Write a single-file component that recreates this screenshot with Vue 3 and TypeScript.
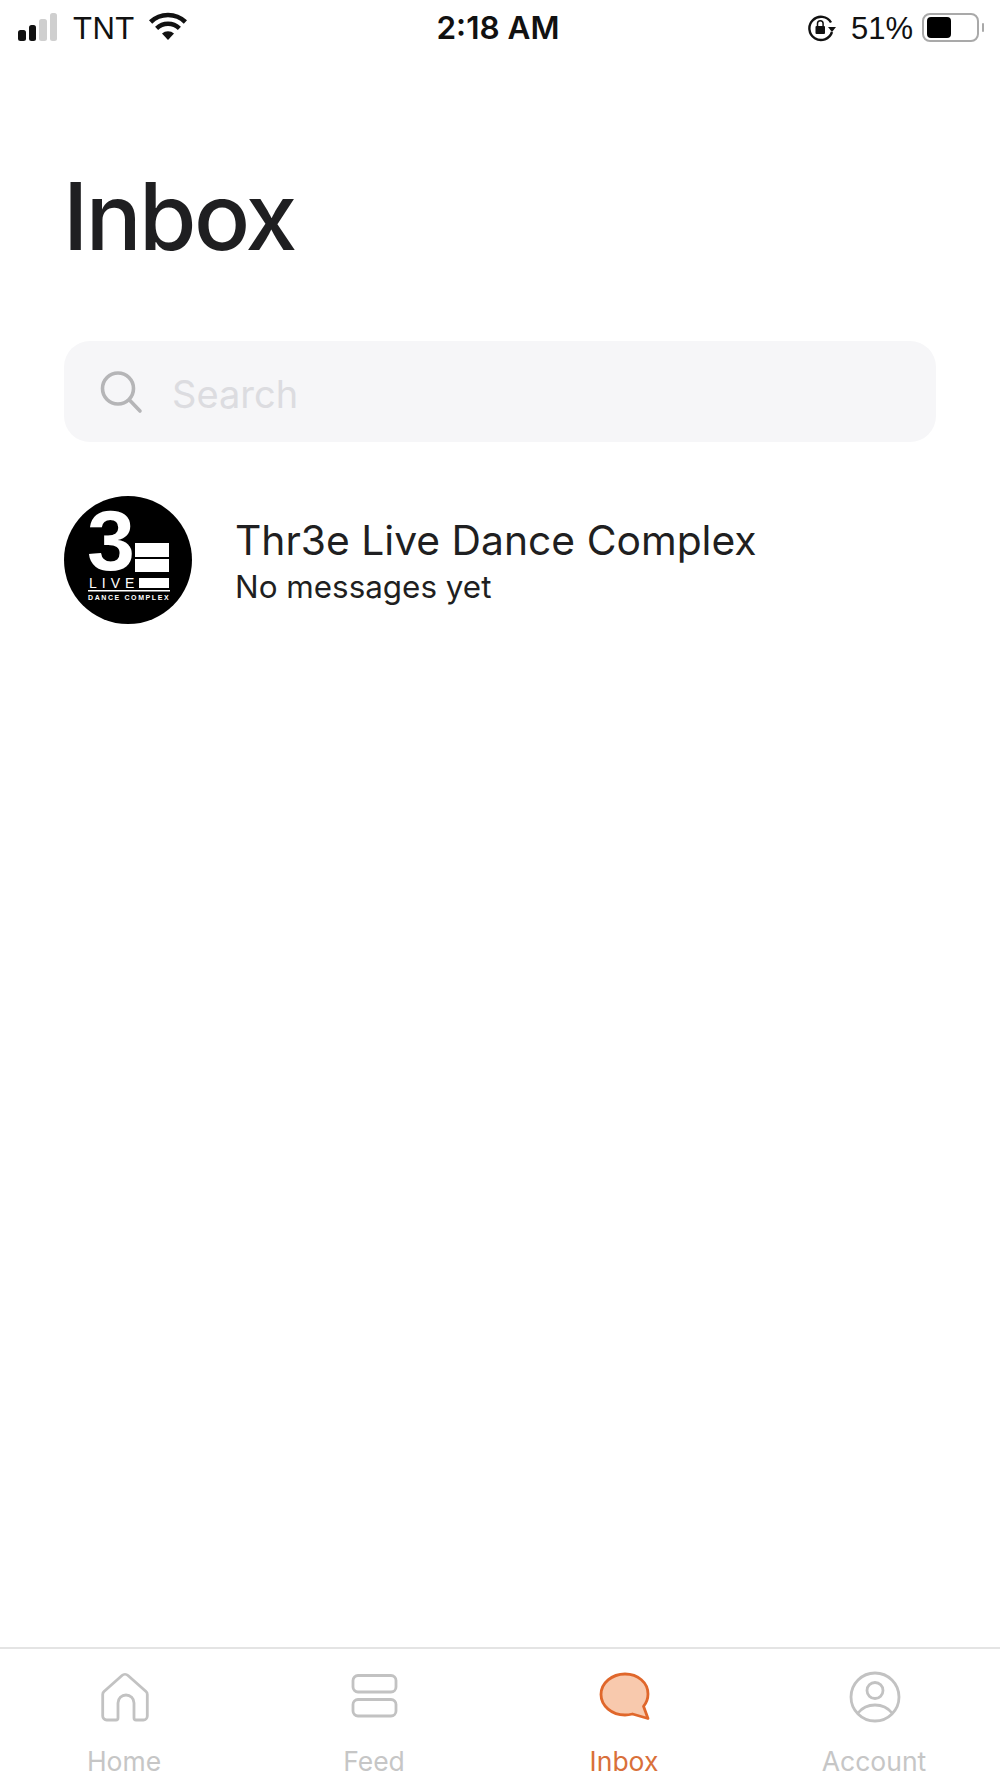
<script setup lang="ts">
const tabs = [
  { key: 'home', label: 'Home' },
  { key: 'feed', label: 'Feed' },
  { key: 'inbox', label: 'Inbox' },
  { key: 'account', label: 'Account' }
]
const active = 'inbox'
</script>

<template>
  <div class="screen">
    <div class="status-bar">
      <div class="status-left">
        <span class="signal">
          <i class="on b1"></i><i class="on b2"></i><i class="b3"></i><i class="b4"></i>
        </span>
        <span class="carrier">TNT</span>
        <svg class="wifi" width="40" height="30" viewBox="0 0 40 30">
          <path d="M20 29 14 22.6a9 9 0 0 1 12 0Z" fill="#111" />
          <path d="M8.6 17.4a16.4 16.4 0 0 1 22.8 0" fill="none" stroke="#111" stroke-width="4.4" />
          <path d="M2.6 11a25 25 0 0 1 34.8 0" fill="none" stroke="#111" stroke-width="4.6" />
        </svg>
      </div>
      <div class="time">2:18 AM</div>
      <div class="status-right">
        <svg class="lock" width="30" height="28" viewBox="0 0 30 28">
          <path d="M24 8.5A11.6 11.6 0 1 0 25 18" fill="none" stroke="#111" stroke-width="2.4" />
          <path d="M21 13h8l-4 5Z" fill="#111" />
          <rect x="8.5" y="12" width="9.5" height="8" rx="1" fill="#111" />
          <path d="M10.5 12V9.6a2.8 2.8 0 0 1 5.6 0V12" fill="none" stroke="#111" stroke-width="1.5" />
        </svg>
        <span class="pct">51%</span>
        <span class="battery"><span class="level"></span></span>
        <span class="nub"></span>
      </div>
    </div>

    <main class="content">
      <h1 class="title">Inbox</h1>

      <div class="search">
        <svg width="46" height="46" viewBox="0 0 46 46">
          <circle cx="20" cy="19.5" r="15.5" fill="none" stroke="#b5b5b7" stroke-width="3.6" />
          <path d="M31.5 31 42 42" fill="none" stroke="#b5b5b7" stroke-width="3.6" stroke-linecap="round" />
        </svg>
        <span class="placeholder">Search</span>
      </div>

      <div class="thread">
        <svg class="avatar" width="128" height="128" viewBox="0 0 128 128">
          <circle cx="64" cy="64" r="64" fill="#000" />
          <text x="23" y="74" class="logo-three">3</text>
          <rect x="71" y="47" width="34" height="14" fill="#fff" />
          <rect x="71" y="63" width="34" height="13" fill="#fff" />
          <rect x="75" y="82" width="30" height="10" fill="#fff" />
          <text x="25" y="92" class="logo-live">LIVE</text>
          <rect x="24" y="94" width="82" height="1.5" fill="#fff" />
          <text x="24" y="104" class="logo-sub">DANCE COMPLEX</text>
        </svg>
        <div class="thread-text">
          <div class="thread-name">Thr3e Live Dance Complex</div>
          <div class="thread-sub">No messages yet</div>
        </div>
      </div>
    </main>

    <nav class="tabbar">
      <div v-for="tab in tabs" :key="tab.key" class="tab" :class="{ active: tab.key === active }">
        <svg class="tab-icon" width="56" height="56" viewBox="0 0 56 56">
          <path
            v-if="tab.key === 'home'"
            d="M7 22.5 25 6.5a4.500 4.500 0 0 1 6 0l18 16a4 4 0 0 1 1.300 3V47a4 4 0 0 1-4 4h-7.300a2 2 0 0 1-2-2V34a8 8 0 0 0-16 0v15a2 2 0 0 1-2 2H9.700a4 4 0 0 1-4-4V25.500a4 4 0 0 1 1.300-3Z"
            fill="none" stroke="#c2c2c2" stroke-width="2.800"
          />
          <g v-else-if="tab.key === 'feed'" fill="none" stroke="#c2c2c2" stroke-width="2.800">
            <rect x="6" y="6.500" width="43" height="16.500" rx="5" />
            <rect x="6" y="30.500" width="43" height="16.500" rx="5" />
          </g>
          <path
            v-else-if="tab.key === 'inbox'"
            d="M28 5c13 0 23 8.500 23 20 0 5-1.700 9-4.500 12.300L51 49.500 35.500 45c-2.400.6-5 1-7.500 1C15 46 4 37 4 25.500 4 14 15 5 28 5Z"
            fill="#f8c9ad" stroke="#e0672b" stroke-width="2.800" stroke-linejoin="round"
          />
          <g v-else fill="none" stroke="#c2c2c2" stroke-width="2.800">
            <circle cx="28" cy="28" r="24" />
            <circle cx="28" cy="21.500" r="8" />
            <path d="M11 44c4-5 10-8 17-8s13 3 17 8" />
          </g>
        </svg>
        <span class="tab-label">{{ tab.label }}</span>
      </div>
    </nav>
  </div>
</template>

<style scoped>
.screen {
  width: 1000px;
  height: 1778px;
  display: flex;
  flex-direction: column;
  overflow: hidden;
  background: #fff;
  color: #1f1f21;
  font-family: Inter, "Liberation Sans", sans-serif;
}

.status-bar {
  display: grid;
  grid-template-columns: 1fr auto 1fr;
  align-items: center;
  height: 54px;
  padding: 0 16px 0 18px;
  color: #111;
  font-family: "Liberation Sans", Arial, sans-serif;
  font-size: 31px;
}

.status-left,
.status-right {
  display: flex;
  align-items: center;
}

.status-right {
  justify-content: flex-end;
}

.signal {
  display: flex;
  align-items: flex-end;
  gap: 3px;
  height: 28px;
}

.signal i {
  width: 7.500px;
  border-radius: 2.500px;
  background: #cfcfcf;
}

.signal i.on {
  background: #111;
}

.b1 { height: 11px; }
.b2 { height: 16px; }
.b3 { height: 22px; }
.b4 { height: 28px; }

.carrier {
  margin-left: 16px;
  margin-top: 3px;
  letter-spacing: 0.500px;
}

.wifi {
  margin-left: 13px;
  margin-top: -3px;
}

.time {
  font-family: Inter, "Liberation Sans", sans-serif;
  font-weight: 600;
  font-size: 31.500px;
  margin-left: -6px;
}

.pct {
  margin-left: 14px;
  margin-top: 3px;
}

.lock {
  margin-top: 2px;
  margin-left: -1px;
}

.battery {
  display: flex;
  align-items: center;
  width: 57px;
  height: 29px;
  margin-left: 9px;
  padding: 3px;
  box-sizing: border-box;
  border: 2px solid #a9a9a9;
  border-radius: 8px;
}

.level {
  width: 24px;
  height: 21px;
  border-radius: 4px;
  background: #000;
}

.nub {
  width: 2px;
  height: 9px;
  margin-left: 3px;
  border-radius: 1px;
  background: #a9a9a9;
}

.content {
  flex: 1;
  padding: 0 64px;
}

.title {
  margin: 105px 0 0 -1px;
  font-size: 93px;
  font-weight: 500;
  line-height: 114px;
  letter-spacing: -2.600px;
}

.search {
  display: flex;
  align-items: center;
  height: 101px;
  margin-top: 68px;
  padding: 0 34px;
  border-radius: 26px;
  background: #f6f6f8;
}

.placeholder {
  margin-left: 28px;
  margin-top: 5px;
  font-size: 38px;
  color: #dcdce0;
}

.thread {
  display: flex;
  align-items: center;
  margin-top: 54px;
}

.avatar {
  flex: none;
  overflow: visible;
}

.logo-three {
  font-family: "Liberation Sans", sans-serif;
  font-size: 86px;
  font-weight: 700;
  fill: #fff;
}

.logo-live {
  font-family: "Liberation Sans", sans-serif;
  font-size: 14px;
  letter-spacing: 5px;
  fill: #fff;
}

.logo-sub {
  font-family: "Liberation Sans", sans-serif;
  font-size: 7px;
  font-weight: 700;
  letter-spacing: 1.600px;
  fill: #fff;
}

.thread-text {
  margin-left: 43px;
}

.thread-name {
  font-size: 40.800px;
  line-height: 50px;
  margin-top: 1px;
}

.thread-sub {
  font-size: 31.400px;
  line-height: 40px;
  margin-top: 2px;
}

.tabbar {
  display: grid;
  grid-template-columns: repeat(4, 1fr);
  height: 131px;
  border-top: 2px solid #e4e4e4;
  box-sizing: border-box;
}

.tab {
  display: flex;
  flex-direction: column;
  align-items: center;
  padding-top: 20px;
  color: #c6c6c6;
}

.tab.active {
  color: #d9703a;
}

.tab-label {
  margin-top: 19px;
  margin-left: -2px;
  font-size: 26.500px;
  line-height: 34px;
}
</style>
